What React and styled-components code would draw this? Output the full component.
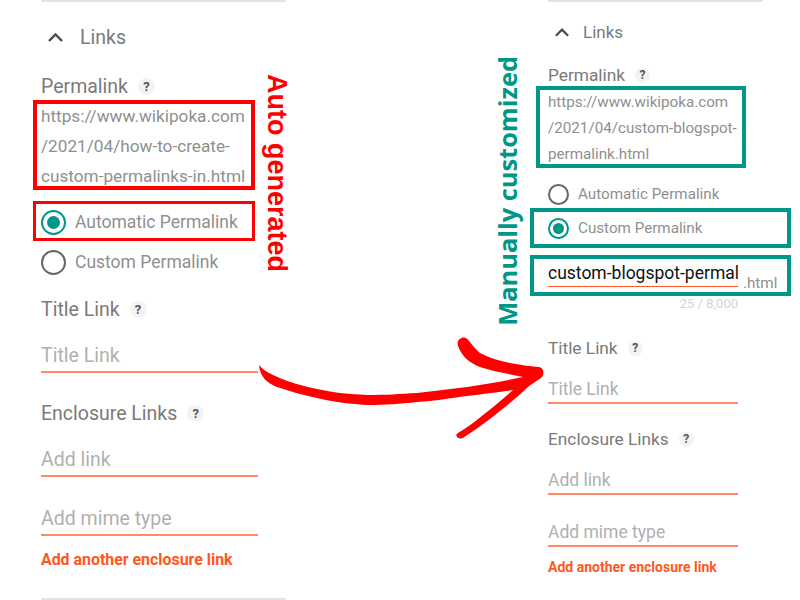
import React from 'react';
import styled, { createGlobalStyle } from 'styled-components';

const GlobalStyle = createGlobalStyle`
  html, body { margin: 0; padding: 0; background: #fff; }
  body { font-family: Roboto, "Liberation Sans", sans-serif; }
`;

const RED = '#ff0000';
const TEAL = '#009688';

const Page = styled.div`
  position: relative;
  width: 800px;
  height: 600px;
  overflow: hidden;
  display: flex;
  align-items: flex-start;
  background: #fff;
`;

const Panel = styled.section`
  position: relative;
  flex: none;
  width: ${(p) => (p.$small ? '215px' : '245px')};
  margin-left: ${(p) => (p.$small ? '262px' : '41px')};
  display: flex;
  flex-direction: column;
`;

const Divider = styled.div`
  height: 2px;
  background: #e4e4e4;
  margin-top: ${(p) => p.$top || 0}px;
`;

const SectionHead = styled.div`
  display: flex;
  align-items: center;
  height: ${(p) => (p.$small ? '24px' : '30px')};
  margin-top: ${(p) => (p.$small ? '18px' : '20px')};
  padding-left: 6px;
  gap: ${(p) => (p.$small ? '13px' : '16px')};
  color: #7a7a7a;
  font-size: ${(p) => (p.$small ? '17px' : '19.5px')};
`;

const Chevron = styled.svg`
  width: ${(p) => (p.$small ? '16px' : '17px')};
  height: 12px;
  fill: none;
  stroke: #4a4a4a;
  stroke-width: 2.4;
`;

const Label = styled.div`
  display: flex;
  align-items: center;
  height: ${(p) => (p.$small ? '22px' : '24px')};
  margin-top: ${(p) => p.$top}px;
  gap: 10px;
  color: #7a7a7a;
  font-size: ${(p) => (p.$small ? '17.3px' : '19.5px')};
`;

const Help = styled.span`
  width: ${(p) => (p.$small ? '15px' : '17px')};
  height: ${(p) => (p.$small ? '15px' : '17px')};
  border-radius: 50%;
  background: #f3f3f3;
  color: #555;
  font-size: ${(p) => (p.$small ? '12px' : '13px')};
  font-weight: 700;
  display: flex;
  align-items: center;
  justify-content: center;
`;

const UrlBlock = styled.div`
  position: relative;
  margin-top: 3px;
  color: #8f8f8f;
  font-size: ${(p) => (p.$small ? '15.2px' : '17.2px')};
  line-height: ${(p) => (p.$small ? '26px' : '30px')};
  white-space: nowrap;
`;

const RadioRow = styled.div`
  position: relative;
  display: flex;
  align-items: center;
  height: ${(p) => (p.$small ? '34px' : '40px')};
  margin-top: ${(p) => p.$top || 0}px;
  gap: 9px;
  color: #8f8f8f;
  font-size: ${(p) => (p.$small ? '15.2px' : '17.5px')};
`;

const Radio = styled.span`
  flex: none;
  box-sizing: border-box;
  width: ${(p) => (p.$small ? '21px' : '25px')};
  height: ${(p) => (p.$small ? '21px' : '25px')};
  border-radius: 50%;
  border: 2px solid ${(p) => (p.$on ? TEAL : '#666')};
  display: flex;
  align-items: center;
  justify-content: center;

  &::after {
    content: '';
    display: ${(p) => (p.$on ? 'block' : 'none')};
    width: ${(p) => (p.$small ? '11px' : '13px')};
    height: ${(p) => (p.$small ? '11px' : '13px')};
    border-radius: 50%;
    background: ${TEAL};
  }
`;

const Highlight = styled.div`
  position: absolute;
  box-sizing: border-box;
  left: ${(p) => p.$l}px;
  right: ${(p) => p.$r}px;
  top: ${(p) => p.$t}px;
  bottom: ${(p) => p.$b}px;
  border: ${(p) => p.$w || 4}px solid ${(p) => p.$color};
  pointer-events: none;
`;

const Field = styled.input`
  display: block;
  box-sizing: border-box;
  width: ${(p) => (p.$small ? '190px' : '217px')};
  height: ${(p) => (p.$small ? '32px' : '35px')};
  margin-top: ${(p) => p.$top}px;
  padding: ${(p) => (p.$small ? '3px' : '1px')} 0 0;
  border: 0;
  border-bottom: 2px solid #ff8a65;
  outline: 0;
  background: transparent;
  font-family: inherit;
  font-size: ${(p) => (p.$small ? '17.5px' : '19.5px')};

  &::placeholder {
    color: #b0b0b0;
    opacity: 1;
  }
`;

const SlugRow = styled.div`
  position: relative;
  display: flex;
  align-items: flex-end;
  margin-top: 12px;
  height: 30px;
  gap: 5px;
`;

const SlugField = styled.input`
  display: block;
  box-sizing: border-box;
  width: 190px;
  height: 30px;
  padding: 3px 0 0;
  border: 0;
  border-bottom: 1.5px solid #ff5a2c;
  outline: 0;
  background: transparent;
  color: #111;
  font-family: inherit;
  font-size: 17.5px;
`;

const Suffix = styled.span`
  color: #8f8f8f;
  font-size: 15.2px;
  line-height: 20px;
  margin-bottom: -6px;
`;

const Counter = styled.div`
  width: 190px;
  height: 14px;
  margin-top: 10px;
  text-align: right;
  color: #d4d4d4;
  font-size: 13px;
  line-height: 14px;
`;

const AddLink = styled.a`
  display: block;
  height: ${(p) => (p.$small ? '18px' : '20px')};
  margin-top: ${(p) => p.$top}px;
  color: #ff5722;
  font-weight: 700;
  font-size: ${(p) => (p.$small ? '14px' : '15.9px')};
  line-height: ${(p) => (p.$small ? '18px' : '20px')};
`;

const SideNote = styled.div`
  position: absolute;
  writing-mode: vertical-rl;
  white-space: nowrap;
  font-weight: 700;
  color: ${(p) => p.$color};
  font-family: ${(p) => (p.$open ? '"Open Sans"' : '"Liberation Sans"')}, sans-serif;
  font-size: ${(p) => p.$size}px;
  line-height: 1;
  left: ${(p) => p.$x}px;
  top: ${(p) => p.$y}px;
  transform: ${(p) => (p.$flip ? 'rotate(180deg)' : 'none')};
`;

const Arrow = styled.svg`
  position: absolute;
  left: 0;
  top: 0;
  width: 800px;
  height: 600px;
  pointer-events: none;
`;

const Links = ({ small }) => (
  <SectionHead $small={small}>
    <Chevron $small={small} viewBox="0 0 17 12">
      <path d="M2 10 L8.5 3.5 L15 10" />
    </Chevron>
    Links
  </SectionHead>
);

const Help2 = ({ small }) => <Help $small={small}>?</Help>;

const App = () => (
  <>
    <GlobalStyle />
    <Page>
      <Panel>
        <Divider />
        <Links />
        <Label $top={22}>
          Permalink <Help2 />
        </Label>
        <UrlBlock>
          https://www.wikipoka.com
          <br />
          /2021/04/how-to-create-
          <br />
          custom-permalinks-in.html
          <Highlight $color={RED} $l={-8} $r={31} $t={-1} $b={1} />
        </UrlBlock>
        <RadioRow $top={11}>
          <Radio $on />
          Automatic Permalink
          <Highlight $color={RED} $w={3} $l={-8} $r={31} $t={-1} $b={1} />
        </RadioRow>
        <RadioRow>
          <Radio />
          Custom Permalink
        </RadioRow>
        <Label $top={15}>
          Title Link <Help2 />
        </Label>
        <Field $top={17} placeholder="Title Link" />
        <Label $top={28}>
          Enclosure Links <Help2 />
        </Label>
        <Field $top={17} placeholder="Add link" />
        <Field $top={24} placeholder="Add mime type" />
        <AddLink $top={14}>Add another enclosure link</AddLink>
        <Divider $top={28} />
        <SideNote $color={RED} $size={27} $x={222} $y={74}>
          Auto generated
        </SideNote>
      </Panel>
      <Panel $small>
        <Divider />
        <Links small />
        <Label $small $top={20}>
          Permalink <Help2 small />
        </Label>
        <UrlBlock $small>
          https://www.wikipoka.com
          <br />
          /2021/04/custom-blogspot-
          <br />
          permalink.html
          <Highlight $color={TEAL} $l={-12} $r={17} $t={-3} $b={-1} />
        </UrlBlock>
        <RadioRow $small $top={10}>
          <Radio $small />
          Automatic Permalink
        </RadioRow>
        <RadioRow $small>
          <Radio $small $on />
          Custom Permalink
          <Highlight $color={TEAL} $l={-18} $r={-28} $t={-3} $b={-3} />
        </RadioRow>
        <SlugRow>
          <SlugField readOnly value="custom-blogspot-permalink" />
          <Suffix>.html</Suffix>
          <Highlight $color={TEAL} $l={-18} $r={-28} $t={-2} $b={-9} />
        </SlugRow>
        <Counter>25 / 8,000</Counter>
        <Label $small $top={26}>
          Title Link <Help2 small />
        </Label>
        <Field $small $top={13} placeholder="Title Link" />
        <Label $small $top={24}>
          Enclosure Links <Help2 small />
        </Label>
        <Field $small $top={13} placeholder="Add link" />
        <Field $small $top={20} placeholder="Add mime type" />
        <AddLink $small $top={11}>
          Add another enclosure link
        </AddLink>
        <SideNote $color={TEAL} $size={25.4} $open $flip $x={-53} $y={56}>
          Manually customized
        </SideNote>
      </Panel>
      <Arrow viewBox="0 0 800 600">
        <path
          fill={RED}
          d="M259 365 C262 369 267 372 273 375 C288 382 302 386 317 389 C335 393 350 394 367 395 C385 395 400 394 417 393 C435 391 450 389 467 387 C487 384 505 381 523 377 C510 374 495 372 480 367 C470 363 462 357 458 346 C456 340 462 336 466 338 C470 341 473 347 480 353 C490 358 500 361 510 363 C520 365 530 366 538 367 C544 367 545 374 541 378 L529 386 C520 395 510 403 500 411 C488 421 475 430 463 438 C458 440 454 435 458 433 C468 427 476 421 483 415 C493 407 503 399 513 390 C498 392 483 394 467 396 C450 398 435 401 417 402 C400 404 385 405 367 405 C350 404 335 402 317 398 C302 395 290 391 277 387 C268 383 260 378 259 365 Z"
        />
      </Arrow>
    </Page>
  </>
);

export default App;
